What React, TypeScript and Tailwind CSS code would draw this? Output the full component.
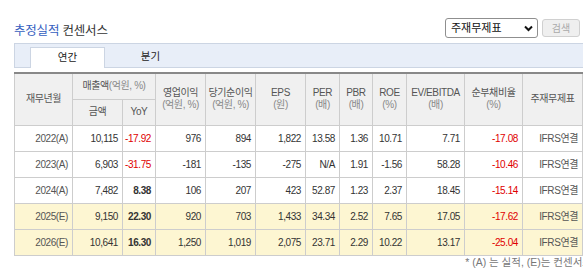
import React from 'react';

type Row = {
  period: string;
  sales: string;
  yoy: string;
  op: string;
  net: string;
  eps: string;
  per: string;
  pbr: string;
  roe: string;
  ev: string;
  debt: string;
  estimate?: boolean;
};

const rows: Row[] = [
  { period: '2022(A)', sales: '10,115', yoy: '-17.92', op: '976', net: '894', eps: '1,822', per: '13.58', pbr: '1.36', roe: '10.71', ev: '7.71', debt: '-17.08' },
  { period: '2023(A)', sales: '6,903', yoy: '-31.75', op: '-181', net: '-135', eps: '-275', per: 'N/A', pbr: '1.91', roe: '-1.56', ev: '58.28', debt: '-10.46' },
  { period: '2024(A)', sales: '7,482', yoy: '8.38', op: '106', net: '207', eps: '423', per: '52.87', pbr: '1.23', roe: '2.37', ev: '18.45', debt: '-15.14' },
  { period: '2025(E)', sales: '9,150', yoy: '22.30', op: '920', net: '703', eps: '1,433', per: '34.34', pbr: '2.52', roe: '7.65', ev: '17.05', debt: '-17.62', estimate: true },
  { period: '2026(E)', sales: '10,641', yoy: '16.30', op: '1,250', net: '1,019', eps: '2,075', per: '23.71', pbr: '2.29', roe: '10.22', ev: '13.17', debt: '-25.04', estimate: true },
];

const colWidths = [58, 50, 33, 50, 50, 50, 34, 33, 34, 58, 58, 60];

const th = 'border border-[#cdcdcd] bg-[#f0f0f0] font-normal text-[#555] text-center align-middle leading-[12px] p-0';
const td = 'border border-[#cdcdcd] h-[26px] p-0 pr-[4px] text-right text-[#333]';

function Head({ title, unit }: { title: string; unit: string }) {
  return (
    <th rowSpan={2} className={th}>
      <div>{title}</div>
      <div className="text-[#888]">{unit}</div>
    </th>
  );
}

export default function App() {
  return (
    <div className="w-[583px] h-[272px] overflow-hidden bg-white font-['Liberation_Sans','Noto_Sans_CJK_KR',sans-serif]">
      <div className="w-[600px] pl-[14px]">
        <div className="mt-[18px] h-[20px] w-[566px] flex items-end justify-between">
          <div className="text-[12.5px] leading-[16px] tracking-[-0.2px] mb-[-1px]">
            <span className="text-[#3560c0]">추정실적</span>{' '}
            <span className="text-[#333]">컨센서스</span>
          </div>
          <div className="flex items-center gap-[4px]">
            <div className="w-[93px] h-[20px] border border-[#8f8f8f] rounded-[3px] flex items-center justify-between pl-[5px] pr-[4px] text-[11px] text-[#111]">
              <span>주재무제표</span>
              <svg width="9" height="7" viewBox="0 0 9 7">
                <path d="M1 1.5 L4.5 5 L8 1.5" stroke="#111" strokeWidth="2" fill="none" />
              </svg>
            </div>
            <div className="w-[38px] h-[18px] border border-[#d0d0d0] rounded-[3px] bg-[#efefef] text-[10px] text-[#aaa] flex items-center justify-center">
              검색
            </div>
          </div>
        </div>

        <div className="mt-[5px] w-[583px] h-[25px] flex items-end border border-[#ccd5e3] bg-[#e8eef8] text-[10.5px] text-[#222]">
          <div className="ml-[15px] w-[75px] h-[21px] mb-[-1px] bg-white border border-b-0 border-[#ccd5e3] flex items-center justify-center">
            연간
          </div>
          <div className="ml-[8px] w-[75px] h-[21px] flex items-center justify-center">분기</div>
        </div>

        <table className="mt-[4px] w-[568px] table-fixed border-collapse border-t-2 border-t-[#888] text-[10px] tracking-[-0.4px]">
          <colgroup>
            {colWidths.map((w, i) => (
              <col key={i} style={{ width: w }} />
            ))}
          </colgroup>
          <thead>
            <tr className="h-[26px]">
              <th rowSpan={2} className={th}>재무년월</th>
              <th colSpan={2} className={th}>
                매출액<span className="text-[#888]">(억원, %)</span>
              </th>
              <Head title="영업이익" unit="(억원, %)" />
              <Head title="당기순이익" unit="(억원, %)" />
              <Head title="EPS" unit="(원)" />
              <Head title="PER" unit="(배)" />
              <Head title="PBR" unit="(배)" />
              <Head title="ROE" unit="(%)" />
              <Head title="EV/EBITDA" unit="(배)" />
              <Head title="순부채비율" unit="(%)" />
              <th rowSpan={2} className={th}>주재무제표</th>
            </tr>
            <tr className="h-[26px]">
              <th className={th}>금액</th>
              <th className={th}>YoY</th>
            </tr>
          </thead>
          <tbody>
            {rows.map((r) => {
              const neg = r.yoy.startsWith('-');
              return (
                <tr key={r.period} className={r.estimate ? 'bg-[#fdf6d2]' : 'bg-white'}>
                  <td className={`${td} pr-0 text-center text-[#555]`}>{r.period}</td>
                  <td className={td}>{r.sales}</td>
                  <td className={`${td} ${neg ? 'text-[#e00000]' : 'text-[#000] font-semibold'}`}>{r.yoy}</td>
                  <td className={td}>{r.op}</td>
                  <td className={td}>{r.net}</td>
                  <td className={td}>{r.eps}</td>
                  <td className={td}>{r.per}</td>
                  <td className={td}>{r.pbr}</td>
                  <td className={td}>{r.roe}</td>
                  <td className={td}>{r.ev}</td>
                  <td className={`${td} text-[#e00000]`}>{r.debt}</td>
                  <td className={`${td} pr-0 text-center text-[#555]`}>IFRS연결</td>
                </tr>
              );
            })}
          </tbody>
        </table>

        <div className="w-[578px] mt-0 text-right text-[10.5px] leading-[12px] text-[#777] whitespace-nowrap">
          * (A) 는 실적, (E)는 컨센서스
        </div>
      </div>
    </div>
  );
}
